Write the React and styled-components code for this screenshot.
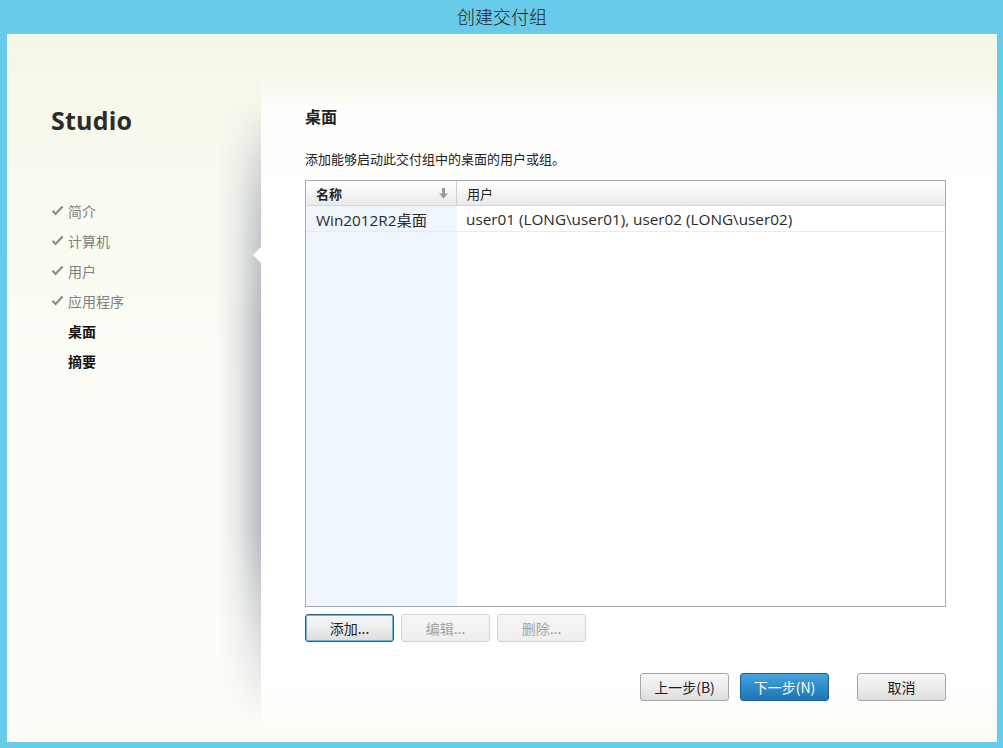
import React from 'react'
import styled, { createGlobalStyle } from 'styled-components'

const GlobalStyle = createGlobalStyle`
  html, body {
    margin: 0;
    padding: 0;
    height: 100%;
  }
  body {
    font-family: "Noto Sans", "Noto Sans CJK SC", sans-serif;
    color: #222;
  }
`

const Frame = styled.div`
  width: 1003px;
  height: 748px;
  box-sizing: border-box;
  background: #68cbe9;
  padding: 0 6px 6px 7px;
  display: flex;
  flex-direction: column;
`

const TitleBar = styled.div`
  height: 34px;
  flex: none;
  display: flex;
  align-items: center;
  justify-content: center;
  font-family: "Noto Sans CJK SC", sans-serif;
  font-size: 18px;
  font-weight: 300;
  color: #1c1c1c;
  padding-bottom: 2px;
  box-sizing: border-box;
`

const Body = styled.div`
  flex: 1;
  display: flex;
  background: linear-gradient(to bottom, #f4f7e8 0%, #f8faef 18%, #fbfcf5 45%, #fcfdf8 100%);
`

const Sidebar = styled.aside`
  width: 254px;
  flex: none;
  padding: 71px 0 0 44px;
  box-sizing: border-box;
`

const Brand = styled.div`
  font-family: "Open Sans", "Noto Sans", sans-serif;
  font-weight: 700;
  font-size: 25px;
  line-height: 30px;
  color: #2b2b2b;
  letter-spacing: 0.2px;
`

const Steps = styled.ul`
  list-style: none;
  margin: 61px 0 0;
  padding: 0;
`

const Step = styled.li`
  display: flex;
  align-items: center;
  height: 30px;
  font-family: "Noto Sans CJK SC", sans-serif;
  font-size: 14px;
  color: ${p => (p.done ? '#808080' : '#111')};
  font-weight: ${p => (p.done ? 400 : 700)};

  svg {
    width: 13px;
    height: 12px;
    margin-right: 4px;
    flex: none;
  }
`

const StepSpacer = styled.span`
  width: 17px;
  flex: none;
`

const Panel = styled.main`
  flex: 1;
  position: relative;
  padding: 71px 51px 0 44px;
  box-sizing: border-box;
  display: flex;
  flex-direction: column;
  background:
    linear-gradient(to bottom, rgba(255, 255, 255, 0) 40px, rgba(255, 255, 255, 0.9) 80px, rgba(255, 255, 255, 0.9) 650px, rgba(255, 255, 255, 0) 700px);

  &::before {
    content: '';
    position: absolute;
    left: -44px;
    top: 66px;
    bottom: 18px;
    width: 44px;
    background: linear-gradient(to right, rgba(150, 155, 172, 0) 0%, rgba(150, 155, 172, 0.18) 45%, rgba(140, 145, 162, 0.6) 100%);
    -webkit-mask-image: linear-gradient(to bottom, transparent 0%, rgba(0, 0, 0, 0.7) 15%, #000 35%, #000 70%, transparent 100%);
    mask-image: linear-gradient(to bottom, transparent 0%, rgba(0, 0, 0, 0.7) 15%, #000 35%, #000 70%, transparent 100%);
  }

  &::after {
    content: '';
    position: absolute;
    left: -8px;
    top: 213px;
    width: 0;
    height: 0;
    border-top: 8px solid transparent;
    border-bottom: 8px solid transparent;
    border-right: 8px solid #ffffff;
  }
`

const Heading = styled.h1`
  margin: 0;
  font-family: "Noto Sans CJK SC", sans-serif;
  font-size: 16px;
  line-height: 22px;
  font-weight: 700;
  color: #222;
`

const Description = styled.p`
  margin: 22px 0 0;
  font-family: "Noto Sans CJK SC", sans-serif;
  font-size: 13px;
  line-height: 20px;
  color: #222;
`

const Table = styled.div`
  margin-top: 11px;
  height: 427px;
  box-sizing: border-box;
  border: 1px solid #a9a9a9;
  background: #fff;
  display: grid;
  grid-template-columns: 151px 1fr;
  grid-template-rows: 25px 26px 1fr;
`

const HeadCell = styled.div`
  display: flex;
  align-items: center;
  justify-content: space-between;
  padding: 0 8px 0 10px;
  background: linear-gradient(to bottom, #ffffff 0%, #f6f6f6 45%, #e9e9e9 100%);
  border-bottom: 1px solid #d8d8d8;
  border-right: ${p => (p.first ? '1px solid #cfcfcf' : 'none')};
  font-family: "Noto Sans CJK SC", sans-serif;
  font-size: 13px;
  font-weight: ${p => (p.first ? 700 : 400)};
  color: #222;
  box-sizing: border-box;

  svg {
    width: 9px;
    height: 11px;
  }
`

const Cell = styled.div`
  display: flex;
  align-items: center;
  padding-left: ${p => (p.first ? 10 : 9)}px;
  background: ${p => (p.first ? '#eef5fd' : '#fff')};
  border-bottom: 1px solid #e6ecf1;
  font-family: "Open Sans", "Noto Sans CJK SC", sans-serif;
  font-size: 15.3px;
  color: #2a2a2a;
  white-space: nowrap;
`

const Filler = styled.div`
  background: ${p => (p.first ? '#eef5fd' : '#fff')};
`

const ButtonRow = styled.div`
  display: flex;
  gap: 7px;
  margin-top: 7px;
`

const Button = styled.button`
  width: 89px;
  height: 28px;
  box-sizing: border-box;
  padding: 0;
  border-radius: 3px;
  font-family: "Noto Sans CJK SC", sans-serif;
  font-size: 14px;
  color: #1d1d1d;
  border: 1px solid #a6a6a6;
  background: linear-gradient(to bottom, #f7f7f7 0%, #ececec 50%, #dddddd 100%);
  margin-left: ${p => p.$gapLeft || 0}px;

  &.focused {
    border: 1px solid #285f88;
    box-shadow: inset 0 0 0 1px #6fb4e0;
  }

  &:disabled {
    border-color: #d3d3d3;
    background: linear-gradient(to bottom, #f6f6f6, #eeeeee);
    color: #a3a3a3;
  }

  &.primary {
    border-color: #1d5f94;
    background: linear-gradient(to bottom, #44a3dc 0%, #2f8ccb 50%, #1f75b6 100%);
    color: #fff;
  }
`

const Footer = styled.div`
  display: flex;
  justify-content: flex-end;
  margin-top: 31px;
`

const Check = () => (
  <svg viewBox="0 0 13 12">
    <path d="M0.8 6.6 L4.6 10.6 L12.4 2.2 L10.8 0.8 L4.5 7.6 L2.4 5.1 Z" fill="#8a8a8a" />
  </svg>
)

const SortArrow = () => (
  <svg viewBox="0 0 9 11">
    <rect x="3" y="0" width="3" height="6" fill="#9a9a9a" />
    <path d="M0 5.5 H9 L4.5 10.5 Z" fill="#9a9a9a" />
  </svg>
)

const steps = [
  { label: '简介', done: true },
  { label: '计算机', done: true },
  { label: '用户', done: true },
  { label: '应用程序', done: true },
  { label: '桌面' },
  { label: '摘要' },
]

export default function App() {
  return (
    <Frame>
      <GlobalStyle />
      <TitleBar>创建交付组</TitleBar>
      <Body>
        <Sidebar>
          <Brand>Studio</Brand>
          <Steps>
            {steps.map(s => (
              <Step key={s.label} done={s.done}>
                {s.done ? <Check /> : <StepSpacer />}
                {s.label}
              </Step>
            ))}
          </Steps>
        </Sidebar>
        <Panel>
          <Heading>桌面</Heading>
          <Description>添加能够启动此交付组中的桌面的用户或组。</Description>
          <Table>
            <HeadCell first>
              名称
              <SortArrow />
            </HeadCell>
            <HeadCell>用户</HeadCell>
            <Cell first>Win2012R2桌面</Cell>
            <Cell>user01 (LONG\user01), user02 (LONG\user02)</Cell>
            <Filler first />
            <Filler />
          </Table>
          <ButtonRow>
            <Button className="focused">添加...</Button>
            <Button disabled>编辑...</Button>
            <Button disabled>删除...</Button>
          </ButtonRow>
          <Footer>
            <Button>上一步(B)</Button>
            <Button className="primary" $gapLeft={11}>下一步(N)</Button>
            <Button $gapLeft={28}>取消</Button>
          </Footer>
        </Panel>
      </Body>
    </Frame>
  )
}
